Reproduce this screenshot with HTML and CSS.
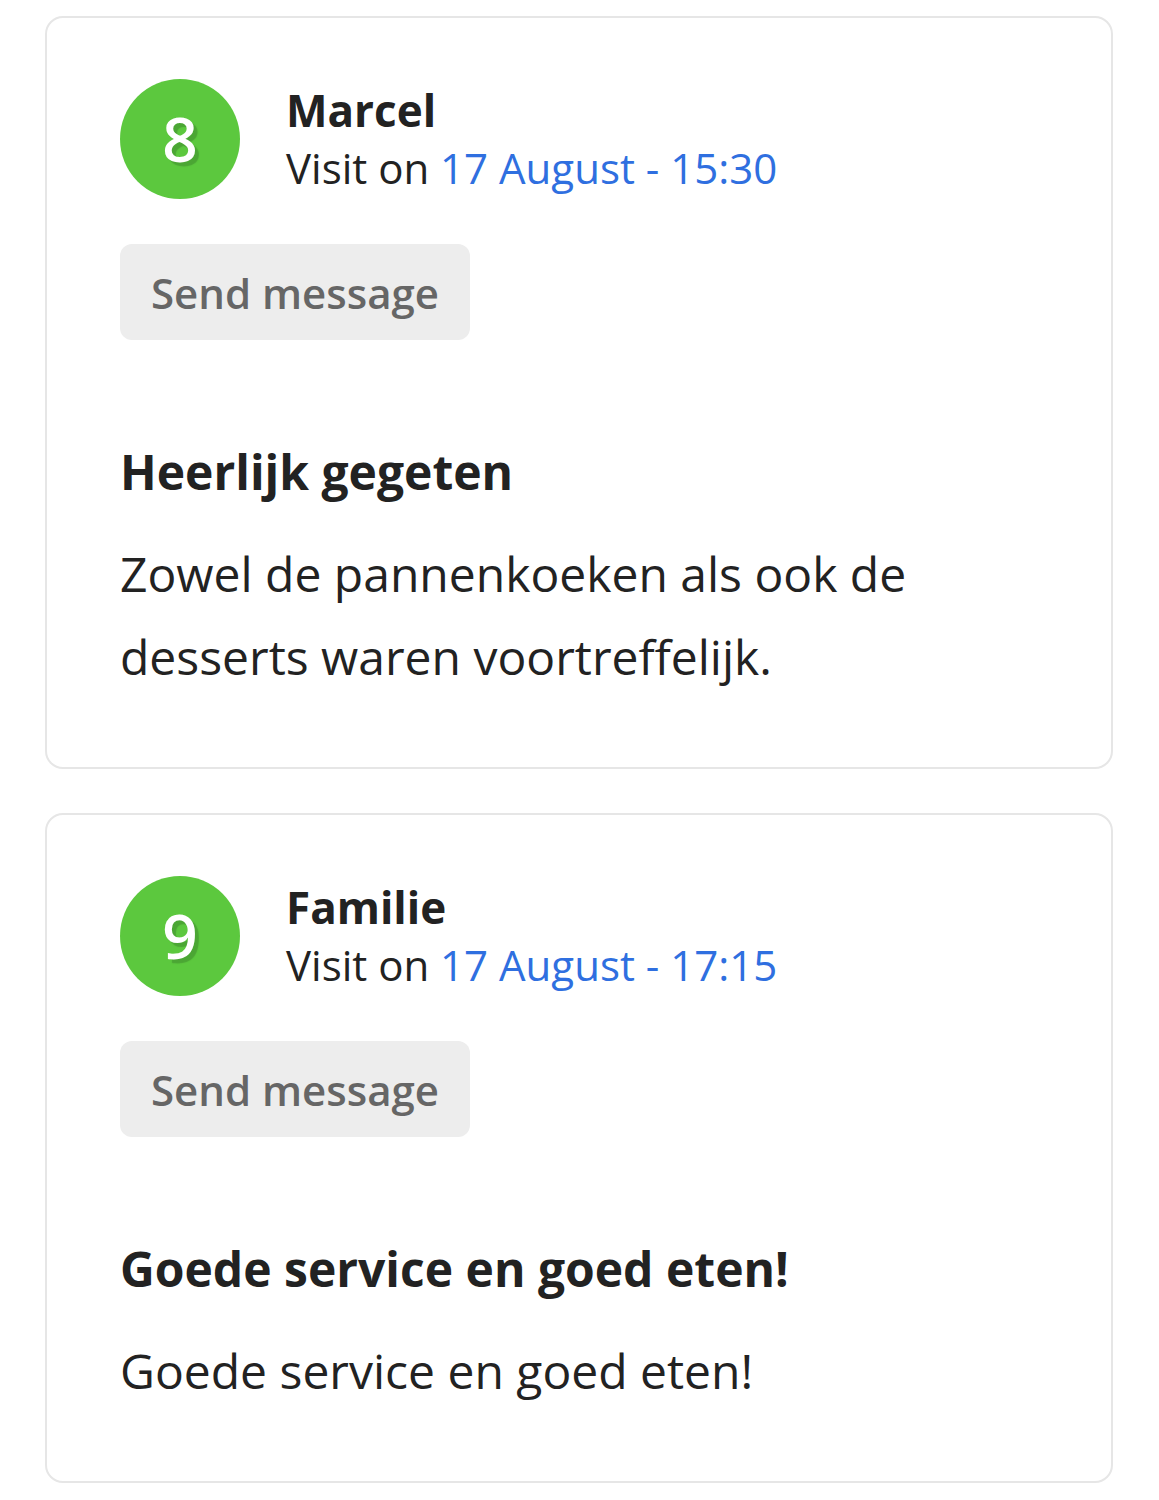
FILE: index.html
```html
<!DOCTYPE html>
<html>
<head>
<meta charset="utf-8">
<link rel="stylesheet" href="styles.css">
</head>
<body>
<div class="list">
  <div class="card">
    <div class="head">
      <div class="score">8</div>
      <div class="who">
        <div class="name">Marcel</div>
        <div class="visit">Visit on <span class="date">17 August - 15:30</span></div>
      </div>
    </div>
    <button class="btn">Send message</button>
    <h2 class="title">Heerlijk gegeten</h2>
    <p class="text">Zowel de pannenkoeken als ook de desserts waren voortreffelijk.</p>
  </div>
  <div class="card">
    <div class="head">
      <div class="score">9</div>
      <div class="who">
        <div class="name">Familie</div>
        <div class="visit">Visit on <span class="date">17 August - 17:15</span></div>
      </div>
    </div>
    <button class="btn">Send message</button>
    <h2 class="title">Goede service en goed eten!</h2>
    <p class="text">Goede service en goed eten!</p>
  </div>
</div>
</body>
</html>
```
FILE: styles.css
```css
body {
  margin: 0;
  background: #fff;
  font-family: "Open Sans", "Noto Sans", sans-serif;
  color: #222;
}
.list {
  padding: 16px 46px 0 45px;
  display: flex;
  flex-direction: column;
  gap: 44px;
}
.card {
  border: 2px solid #e6e6e6;
  border-radius: 18px;
  padding: 61px 73px 69px 73px;
  width: 1068px;
  box-sizing: border-box;
}
.head {
  display: flex;
  align-items: flex-start;
  gap: 46px;
}
.score {
  width: 120px;
  height: 120px;
  border-radius: 50%;
  background: #5cc83e;
  color: #fff;
  font-size: 62px;
  font-weight: 600;
  line-height: 118px;
  text-align: center;
  text-shadow: 4px 4px 1px #4ba634;
  flex: none;
}
.who {
  padding-top: 2px;
}
.name {
  font-weight: 700;
  font-size: 44px;
  line-height: 58px;
  color: #222;
}
.visit {
  font-size: 42px;
  line-height: 58px;
  color: #222;
}
.date {
  color: #2f6fe0;
}
.btn {
  display: block;
  margin-top: 45px;
  height: 96px;
  padding: 0 31px;
  border: none;
  border-radius: 12px;
  background: #ededed;
  color: #666;
  font-family: inherit;
  font-size: 42px;
  font-weight: 600;
}
.title {
  margin: 102px 0 0;
  font-weight: 700;
  font-size: 48px;
  line-height: 60px;
  color: #222;
}
.text {
  margin: 30px 0 0;
  font-size: 48px;
  line-height: 83px;
  color: #222;
}
```
